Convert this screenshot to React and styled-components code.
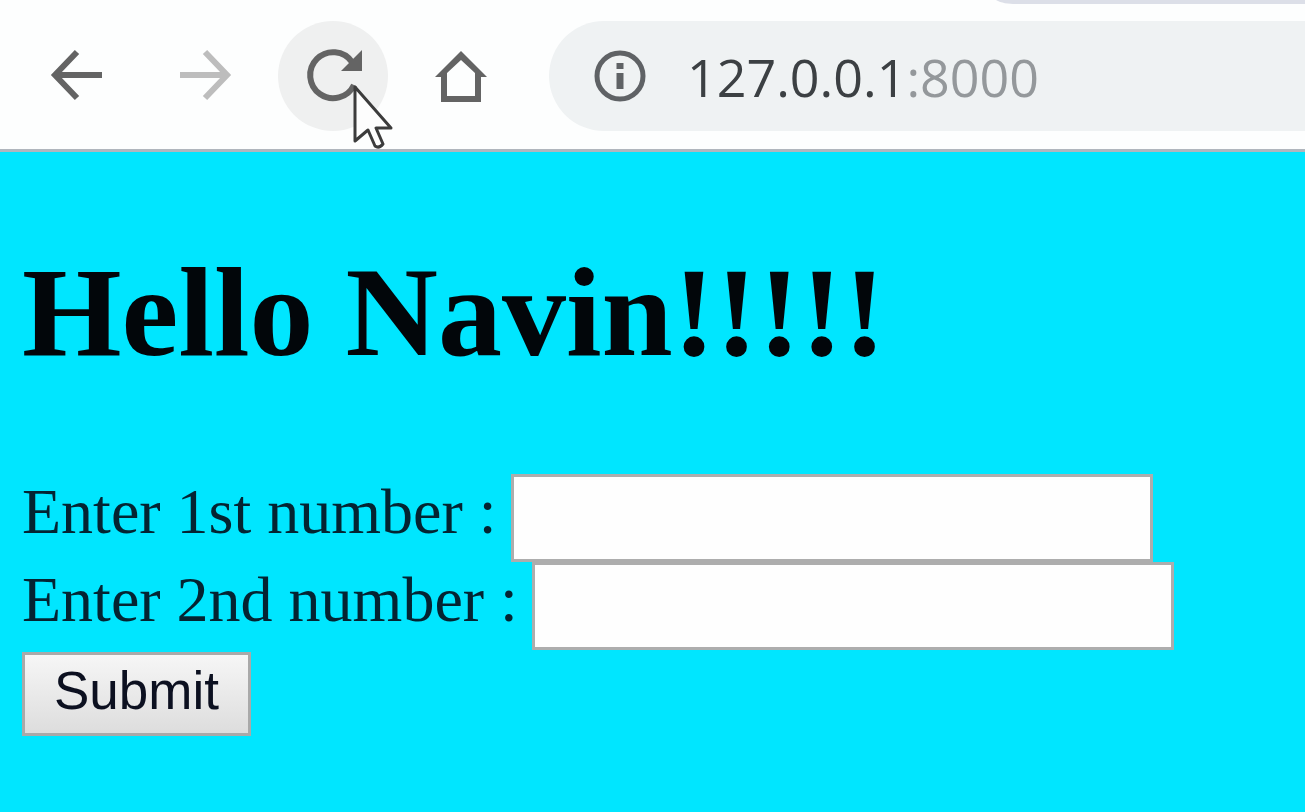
import React from "react";
import styled, { createGlobalStyle } from "styled-components";

const GlobalStyle = createGlobalStyle`
  *, *::before, *::after { box-sizing: border-box; }
  html, body, #root { min-height: 100vh; }
  body { margin: 0; background: #00e6ff; }
`;

const Window = styled.div`
  display: flex;
  flex-direction: column;
  min-height: 100vh;
  overflow: hidden;
`;

const BrowserBar = styled.header`
  position: relative;
  background: #fdfefe;
  border-bottom: 3px solid #b0b6bd;
  padding: 21px 0 18px 22px;
`;

const TabStrip = styled.svg`
  position: absolute;
  top: 0;
  right: 0;
  width: 24%;
  height: 5px;
`;

const Toolbar = styled.nav`
  display: flex;
  align-items: center;
  gap: 18px;
`;

const IconButton = styled.button`
  position: relative;
  display: flex;
  align-items: center;
  justify-content: center;
  flex: none;
  width: 110px;
  height: 110px;
  padding: 0;
  border: 0;
  border-radius: 50%;
  background: ${(p) => (p.$hovered ? "#eff0f0" : "transparent")};
  color: ${(p) => (p.$faded ? "#bdbdbd" : "#646464")};
`;

const Icon = styled.svg`
  display: block;
  width: 64px;
  height: 64px;
  fill: none;
  stroke: currentColor;
  stroke-width: 6;
`;

const Pointer = styled.svg`
  position: absolute;
  left: 74px;
  top: 62px;
  width: 44px;
  height: 68px;
  z-index: 1;
`;

const AddressBar = styled.div`
  display: flex;
  align-items: center;
  flex: 1;
  gap: 35px;
  height: 110px;
  margin-left: 15px;
  padding-left: 39px;
  border-radius: 55px 0 0 55px;
  background: #eff2f3;
  color: #5f6265;
`;

const Address = styled.p`
  margin: 0;
  font: 52px "Open Sans", "Noto Sans", sans-serif;
  color: #3c4043;
`;

const Port = styled.span`
  color: #94989b;
`;

const Page = styled.main`
  flex: 1;
  padding: 86px 22px 64px;
  font-family: "Liberation Serif", "Times New Roman", serif;
  color: #042432;
`;

const Title = styled.h1`
  margin: 0 0 88px;
  font-size: 128px;
  line-height: 148px;
  color: #02060a;
  white-space: nowrap;
`;

const Form = styled.form`
  display: flex;
  flex-direction: column;
  align-items: flex-start;
`;

const Field = styled.div`
  display: flex;
  gap: 14px;
  font-size: 64px;
  line-height: 76px;
  white-space: nowrap;
`;

const NumberInput = styled.input`
  width: 642px;
  height: 88px;
  padding: 4px 8px;
  border: 3px solid #adadad;
  border-radius: 0;
  background: #fefefe;
  font: 52px "Liberation Sans", Arial, sans-serif;
  outline: none;
`;

const SubmitButton = styled.button`
  height: 84px;
  margin-top: 2px;
  padding: 0 29px 8px;
  border: 3px solid #a9a9a9;
  border-radius: 0;
  background: linear-gradient(#f6f6f6, #dddddd);
  font: 53px "Liberation Sans", Arial, sans-serif;
  color: #0c1020;
`;

export default function App() {
  return (
    <Window>
      <GlobalStyle />
      <BrowserBar>
        <TabStrip viewBox="0 0 313 5" preserveAspectRatio="none" aria-hidden="true">
          <path d="M4 0H313V4H24C16 4 9 3 4 0Z" fill="#dcdfe8" />
        </TabStrip>
        <Toolbar aria-label="Browser">
          <IconButton aria-label="Back">
            <Icon viewBox="0 0 64 64">
              <path d="M57 31H11M32 8L10 31L32 54" />
            </Icon>
          </IconButton>
          <IconButton aria-label="Forward" $faded>
            <Icon viewBox="0 0 64 64">
              <path d="M7 31H53M32 8L54 31L32 54" />
            </Icon>
          </IconButton>
          <IconButton aria-label="Reload" $hovered>
            <Icon viewBox="0 0 64 64">
              <path d="M53 41A23 23 0 1 1 51 18" />
              <path d="M61 6V27H40Z" fill="currentColor" stroke="none" />
            </Icon>
            <Pointer viewBox="0 0 44 68" aria-hidden="true">
              <path
                d="M3 4V58L16 47L23 63Q27 66 31 61L24 45H39Z"
                fill="#fdfdfd"
                stroke="#3c3c3c"
                strokeWidth="3"
                strokeLinejoin="round"
              />
            </Pointer>
          </IconButton>
          <IconButton aria-label="Home">
            <Icon viewBox="0 0 64 64">
              <path
                d="M32 7L58 33H52V58H12V33H6ZM32 16L46 29V52H18V29Z"
                fill="currentColor"
                fillRule="evenodd"
                stroke="none"
              />
            </Icon>
          </IconButton>
          <AddressBar>
            <Icon viewBox="0 0 64 64" aria-hidden="true">
              <circle cx="32" cy="32" r="23" strokeWidth="5" />
              <path d="M32 29V45" strokeWidth="7" />
              <path d="M32 19V25" strokeWidth="7" />
            </Icon>
            <Address>
              127.0.0.1<Port>:8000</Port>
            </Address>
          </AddressBar>
        </Toolbar>
      </BrowserBar>
      <Page>
        <Title>Hello Navin!!!!!</Title>
        <Form onSubmit={(e) => e.preventDefault()}>
          <Field>
            <label htmlFor="num1">Enter 1st number :</label>
            <NumberInput id="num1" name="num1" type="text" />
          </Field>
          <Field>
            <label htmlFor="num2">Enter 2nd number :</label>
            <NumberInput id="num2" name="num2" type="text" />
          </Field>
          <SubmitButton type="submit">Submit</SubmitButton>
        </Form>
      </Page>
    </Window>
  );
}
